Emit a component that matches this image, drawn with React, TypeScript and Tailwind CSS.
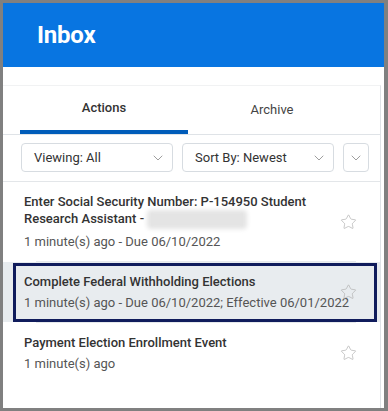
import { ChevronDown, Star } from "lucide-react";

type InboxItem = {
  title: React.ReactNode;
  meta: string;
  selected?: boolean;
};

const items: InboxItem[] = [
  {
    title: (
      <>
        Enter Social Security Number: P-154950 Student Research Assistant -{" "}
        <span className="inline-block w-[100px] h-[19px] align-middle bg-[#e4e4e4] blur-[2px] rounded-sm" />
      </>
    ),
    meta: "1 minute(s) ago - Due 06/10/2022",
  },
  {
    title: "Complete Federal Withholding Elections",
    meta: "1 minute(s) ago - Due 06/10/2022; Effective 06/01/2022",
    selected: true,
  },
  {
    title: "Payment Election Enrollment Event",
    meta: "1 minute(s) ago",
  },
];

function FilterSelect({ label, width }: { label?: string; width: string }) {
  return (
    <div
      className={`${width} h-[29px] flex items-center justify-between rounded-[4px] border border-[#d7dce1] bg-white pl-[12px] pr-[6px]`}
    >
      {label && <span className="text-[13px] text-[#333]">{label}</span>}
      <ChevronDown className="w-4 h-4 text-[#8a8a8a]" strokeWidth={1.25} />
    </div>
  );
}

export default function App() {
  return (
    <div className="w-[388px] h-[411px] bg-[#808080] pt-[3px] pl-[3px] pr-[4px] pb-[3px] font-['Roboto',sans-serif]">
      <div className="h-full bg-white flex flex-col overflow-hidden">
        {/* Header */}
        <div className="h-[64px] shrink-0 bg-[#0875e1] flex items-center px-[34px]">
          <h1 className="text-[24px] font-bold text-white tracking-[-0.2px]">Inbox</h1>
        </div>

        {/* Panel */}
        <div className="mt-[18px] w-[378px] flex-1 border-t border-r border-[#f1f2f3] border-r-[#dfe3e7] flex flex-col">
          {/* Tabs */}
          <div className="flex pl-[17px] border-b border-[#dfe3e7]">
            <div className="w-[168px] h-[48px] flex items-center justify-center border-b-4 border-[#005cb9] text-[13px] font-medium text-[#333]">
              Actions
            </div>
            <div className="w-[168px] h-[48px] flex items-center justify-center text-[13px] text-[#444]">
              Archive
            </div>
          </div>

          {/* Filters */}
          <div className="flex gap-[9px] pl-[18px] pt-[8px] pb-[9px] border-b border-[#e3e6e9]">
            <FilterSelect label="Viewing: All" width="w-[152px]" />
            <FilterSelect label="Sort By: Newest" width="w-[152px]" />
            <div className="w-[26px] h-[29px] flex items-center justify-center rounded-[4px] border border-[#d7dce1]">
              <ChevronDown className="w-4 h-4 text-[#8a8a8a]" strokeWidth={1.25} />
            </div>
          </div>

          {/* Items */}
          <div className="flex flex-col">
            {items.map((item, i) => (
              <div key={i}>
                <div
                  className={`relative pl-[21px] pr-[40px] pt-[11px] pb-[11px] ${
                    item.selected ? "bg-[#e8ecef]" : ""
                  }`}
                >
                  {item.selected && (
                    <div className="absolute left-[10px] right-[3px] top-[1px] bottom-0 border-[3px] border-[#101c5c]" />
                  )}
                  <div className="relative text-[13px] leading-[17px] font-medium text-[#333]">
                    {item.title}
                  </div>
                  <div className="relative mt-[4px] text-[13px] leading-[17px] text-[#555] whitespace-nowrap">
                    {item.meta}
                  </div>
                  <Star
                    className="absolute right-[23px] top-1/2 -translate-y-1/2 w-[17px] h-[17px] text-[#b3b3b3]"
                    strokeWidth={1}
                  />
                </div>
                {i < items.length - 1 && <div className="h-px ml-[33px] mr-[24px] bg-[#e6e9ec]" />}
              </div>
            ))}
          </div>
        </div>
      </div>
    </div>
  );
}
